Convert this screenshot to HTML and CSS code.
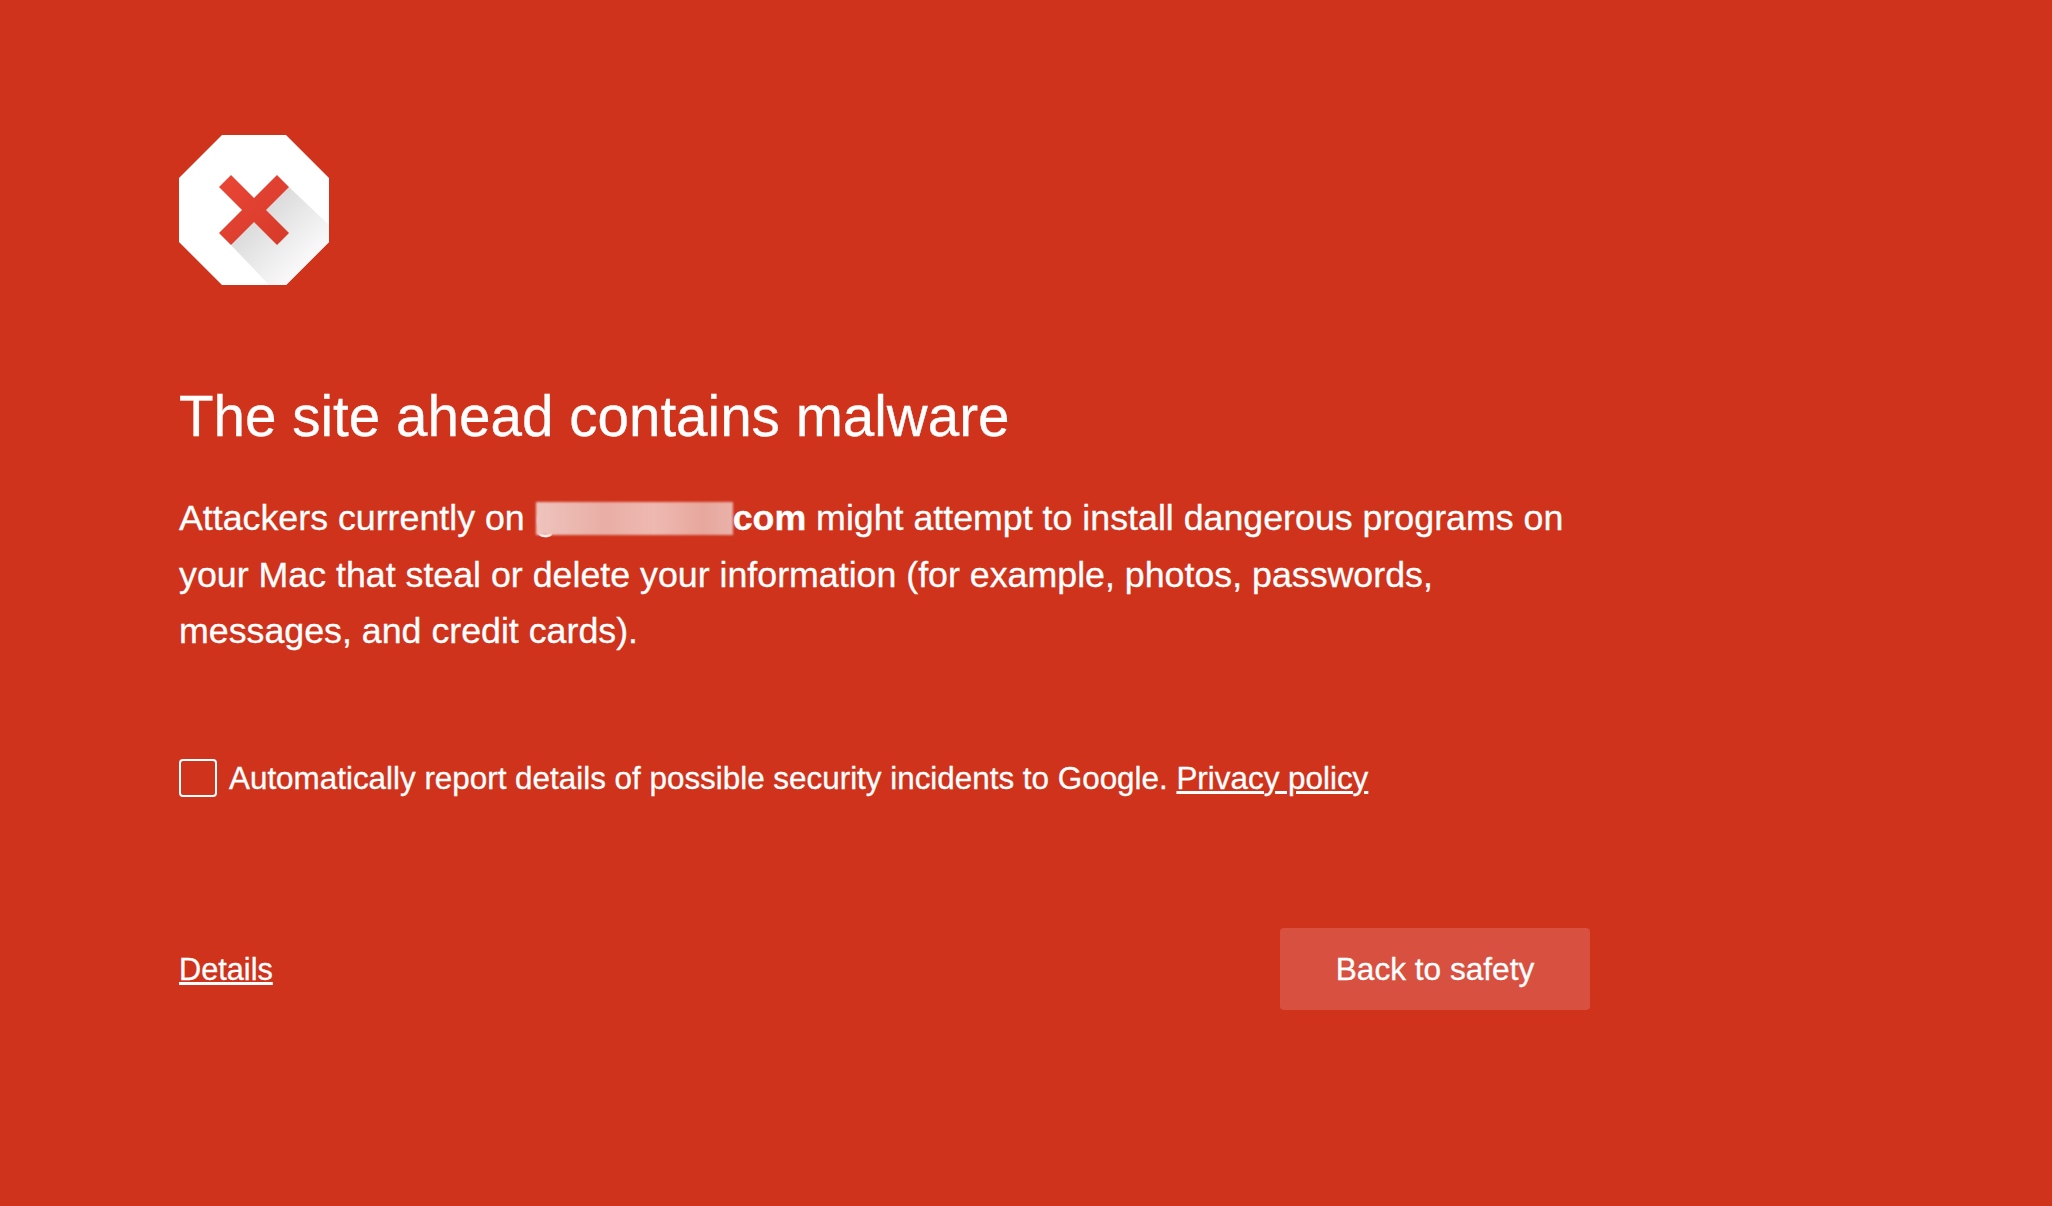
FILE: index.html
```html
<!DOCTYPE html>
<html>
<head>
  <meta charset="UTF-8">
  <meta name="viewport" content="width=device-width, initial-scale=1.0">
  <title>Security error</title>
  <link rel="stylesheet" href="styles.css">
</head>
<body>
  <div class="interstitial">
    <svg class="stop-icon" width="150" height="150" viewBox="0 0 150 150">
      <defs>
        <linearGradient id="shadowFade" gradientUnits="userSpaceOnUse" x1="75" y1="75" x2="125" y2="125">
          <stop offset="0" stop-color="#d8d8d8"/>
          <stop offset="1" stop-color="#f8f8f8"/>
        </linearGradient>
        <linearGradient id="crossFill" x1="0" y1="0" x2="1" y2="1">
          <stop offset="0" stop-color="#ea4636"/>
          <stop offset="1" stop-color="#d63a29"/>
        </linearGradient>
      </defs>
      <polygon points="43,0 107,0 150,43 150,107 107,150 43,150 0,107 0,43" fill="#ffffff"/>
      <polygon points="110,52 150,90 150,107 107,150 90,150 52,110 75,75" fill="url(#shadowFade)"/>
      <polygon points="52,40 75,63 98,40 110,52 87,75 110,98 98,110 75,87 52,110 40,98 63,75 40,52" fill="url(#crossFill)"/>
    </svg>

    <h1 class="title">The site ahead contains malware</h1>

    <p class="message">Attackers currently on <span class="blurred">g</span><b>com</b> might attempt to install dangerous programs on your Mac that steal or delete your information (for example, photos, passwords, messages, and credit cards).</p>

    <label class="report">
      <span class="checkbox"></span>
      <span>Automatically report details of possible security incidents to Google. <a href="#">Privacy policy</a></span>
    </label>

    <div class="actions">
      <a class="details-link" href="#">Details</a>
      <button class="safety-btn">Back to safety</button>
    </div>
  </div>
</body>
</html>
```

FILE: styles.css
```css
* {
  margin: 0;
  padding: 0;
  box-sizing: border-box;
}

body {
  height: 100vh;
  background: #cf331c;
  color: #ffffff;
  font-family: 'Liberation Sans', Arial, sans-serif;
  overflow: hidden;
  -webkit-text-stroke: 0.3px #ffffff;
}

a {
  color: #ffffff;
}

.interstitial {
  width: 1411px;
  margin-left: 179px;
  padding-top: 135px;
}

.stop-icon {
  display: block;
}

.title {
  margin-top: 95px;
  font-size: 56.6px;
  font-weight: 400;
  line-height: 74px;
}

.message {
  max-width: 1400px;
  margin-top: 36px;
  font-size: 35.75px;
  line-height: 56.5px;
}

.blurred {
  display: inline-block;
  position: relative;
  width: 197px;
  margin-left: 1px;
  line-height: 1;
}

.blurred::after {
  content: '';
  position: absolute;
  top: 1px;
  left: 0;
  right: 0;
  bottom: 2px;
  background: linear-gradient(90deg, #eec4bd, #e9aea5 35%, #eeb9b1 60%, #e7a79d 85%, #eab2aa);
  filter: blur(0.8px);
}

.message b {
  font-weight: 700;
}

.report {
  display: flex;
  align-items: center;
  gap: 12px;
  margin-top: 99px;
  font-size: 31.4px;
}

.checkbox {
  width: 38px;
  height: 38px;
  margin-bottom: 2px;
  border: 2px solid #ffffff;
  border-radius: 4px;
}

.actions {
  display: flex;
  justify-content: space-between;
  align-items: center;
  margin-top: 129px;
}

.details-link {
  margin-top: 2px;
  font-size: 30.7px;
}

.safety-btn {
  width: 310px;
  height: 82px;
  padding-top: 2px;
  border: 0;
  border-radius: 4px;
  background: #d8503f;
  color: #ffffff;
  font-family: inherit;
  font-size: 31.6px;
  -webkit-text-stroke: 0.3px #ffffff;
}
```
